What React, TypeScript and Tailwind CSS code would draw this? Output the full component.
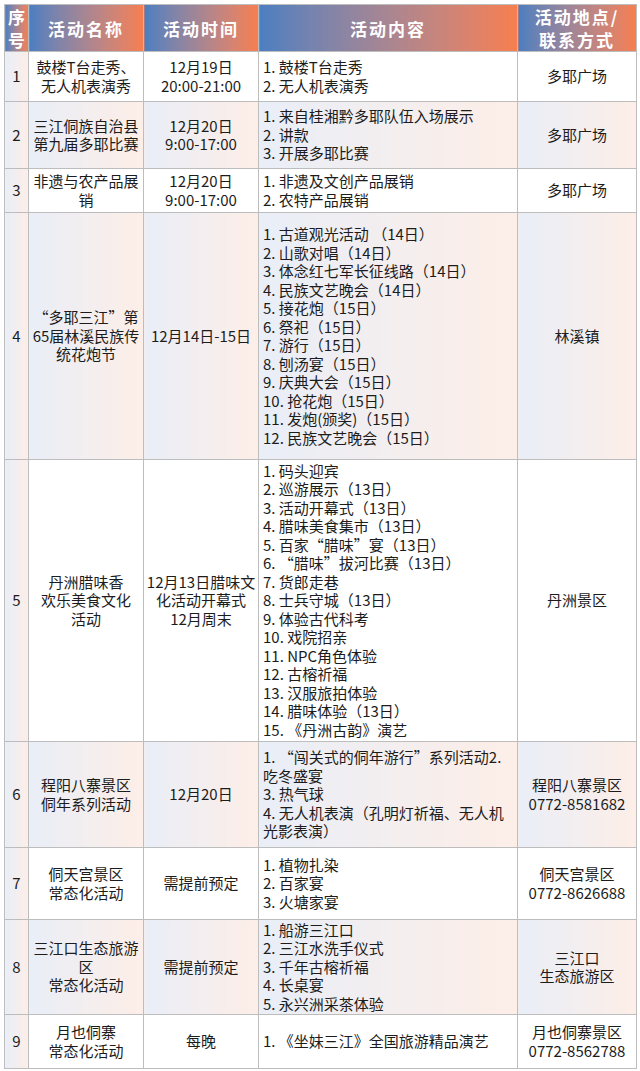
import React from 'react';

interface Row {
    no: string;
    name: string[];
    time: string[];
    items: string[];
    place: string[];
    h: string;
    shaded?: boolean;
}

const rows: Row[] = [
    {
        no: '1',
        name: ['鼓楼T台走秀、', '无人机表演秀'],
        time: ['12月19日', '20:00-21:00'],
        items: ['1. 鼓楼T台走秀', '2. 无人机表演秀'],
        place: ['多耶广场'],
        h: 'h-[50px]',
    },
    {
        no: '2',
        name: ['三江侗族自治县', '第九届多耶比赛'],
        time: ['12月20日', '9:00-17:00'],
        items: ['1. 来自桂湘黔多耶队伍入场展示', '2. 讲款', '3. 开展多耶比赛'],
        place: ['多耶广场'],
        h: 'h-[67px]',
        shaded: true,
    },
    {
        no: '3',
        name: ['非遗与农产品展', '销'],
        time: ['12月20日', '9:00-17:00'],
        items: ['1. 非遗及文创产品展销', '2. 农特产品展销'],
        place: ['多耶广场'],
        h: 'h-[44px]',
    },
    {
        no: '4',
        name: ['“多耶三江”第', '65届林溪民族传', '统花炮节'],
        time: ['12月14日-15日'],
        items: [
            '1. 古道观光活动 （14日）',
            '2. 山歌对唱（14日）',
            '3. 体念红七军长征线路（14日）',
            '4. 民族文艺晚会（14日）',
            '5. 接花炮（15日）',
            '6. 祭祀（15日）',
            '7. 游行（15日）',
            '8. 刨汤宴（15日）',
            '9. 庆典大会（15日）',
            '10. 抢花炮（15日）',
            '11. 发炮(颁奖)（15日）',
            '12. 民族文艺晚会（15日）',
        ],
        place: ['林溪镇'],
        h: 'h-[247px]',
        shaded: true,
    },
    {
        no: '5',
        name: ['丹洲腊味香', '欢乐美食文化', '活动'],
        time: ['12月13日腊味文', '化活动开幕式', '12月周末'],
        items: [
            '1. 码头迎宾',
            '2. 巡游展示（13日）',
            '3. 活动开幕式（13日）',
            '4. 腊味美食集市（13日）',
            '5. 百家“腊味”宴（13日）',
            '6. “腊味”拔河比赛（13日）',
            '7. 货郎走巷',
            '8. 士兵守城（13日）',
            '9. 体验古代科考',
            '10. 戏院招亲',
            '11. NPC角色体验',
            '12. 古榕祈福',
            '13. 汉服旅拍体验',
            '14. 腊味体验（13日）',
            '15. 《丹洲古韵》演艺',
        ],
        place: ['丹洲景区'],
        h: 'h-[282px]',
    },
    {
        no: '6',
        name: ['程阳八寨景区', '侗年系列活动'],
        time: ['12月20日'],
        items: [
            '1. “闯关式的侗年游行”系列活动2.',
            '吃冬盛宴',
            '3. 热气球',
            '4. 无人机表演（孔明灯祈福、无人机',
            '光影表演）',
        ],
        place: ['程阳八寨景区', '0772-8581682'],
        h: 'h-[106px]',
        shaded: true,
    },
    {
        no: '7',
        name: ['侗天宫景区', '常态化活动'],
        time: ['需提前预定'],
        items: ['1. 植物扎染', '2. 百家宴', '3. 火塘家宴'],
        place: ['侗天宫景区', '0772-8626688'],
        h: 'h-[72px]',
    },
    {
        no: '8',
        name: ['三江口生态旅游', '区', '常态化活动'],
        time: ['需提前预定'],
        items: ['1. 船游三江口', '2. 三江水洗手仪式', '3. 千年古榕祈福', '4. 长桌宴', '5. 永兴洲采茶体验'],
        place: ['三江口', '生态旅游区'],
        h: 'h-[95px]',
        shaded: true,
    },
    {
        no: '9',
        name: ['月也侗寨', '常态化活动'],
        time: ['每晚'],
        items: ['1. 《坐妹三江》全国旅游精品演艺'],
        place: ['月也侗寨景区', '0772-8562788'],
        h: 'h-[54px]',
    },
];

const shade = 'bg-gradient-to-r from-[#e9eef7] to-[#fdeee7]';
const head = 'bg-gradient-to-r from-[#4b7ec0] to-[#f77e4e] text-white font-bold text-[17px] leading-[23px] tracking-[2px] text-center align-middle border border-[#bdbdbd]';
const cell = 'border border-[#bdbdbd] align-middle';

function Lines({ lines }: { lines: string[] }) {
    return (
        <>
            {lines.map((l, i) => (
                <div key={i} className="whitespace-nowrap">
                    {l}
                </div>
            ))}
        </>
    );
}

export default function App() {
    return (
        <div className="bg-white p-1 font-['Noto_Sans_CJK_SC','Noto_Sans',sans-serif] text-[#1c1c1c]">
            <table className="w-[632px] table-fixed border-collapse text-[15px] leading-[18.5px]">
                <colgroup>
                    <col className="w-[24px]" />
                    <col className="w-[115px]" />
                    <col className="w-[115px]" />
                    <col className="w-[259px]" />
                    <col className="w-[119px]" />
                </colgroup>
                <thead>
                    <tr className="h-[46px]">
                        <th className={head + ' tracking-normal px-0'}>
                            <div>序</div>
                            <div>号</div>
                        </th>
                        <th className={head}>活动名称</th>
                        <th className={head}>活动时间</th>
                        <th className={head}>活动内容</th>
                        <th className={head}>
                            <div>活动地点/</div>
                            <div>联系方式</div>
                        </th>
                    </tr>
                </thead>
                <tbody>
                    {rows.map((r) => (
                        <tr key={r.no} className={r.h}>
                            <td className={`${cell} ${shade} text-center`}>{r.no}</td>
                            <td className={`${cell} ${r.shaded ? shade : ''} text-center px-0.5`}>
                                <Lines lines={r.name} />
                            </td>
                            <td className={`${cell} ${r.shaded ? shade : ''} text-center`}>
                                <Lines lines={r.time} />
                            </td>
                            <td className={`${cell} ${r.shaded ? shade : ''} pl-1 text-left`}>
                                <Lines lines={r.items} />
                            </td>
                            <td className={`${cell} ${r.shaded ? shade : ''} text-center`}>
                                <Lines lines={r.place} />
                            </td>
                        </tr>
                    ))}
                </tbody>
            </table>
        </div>
    );
}
